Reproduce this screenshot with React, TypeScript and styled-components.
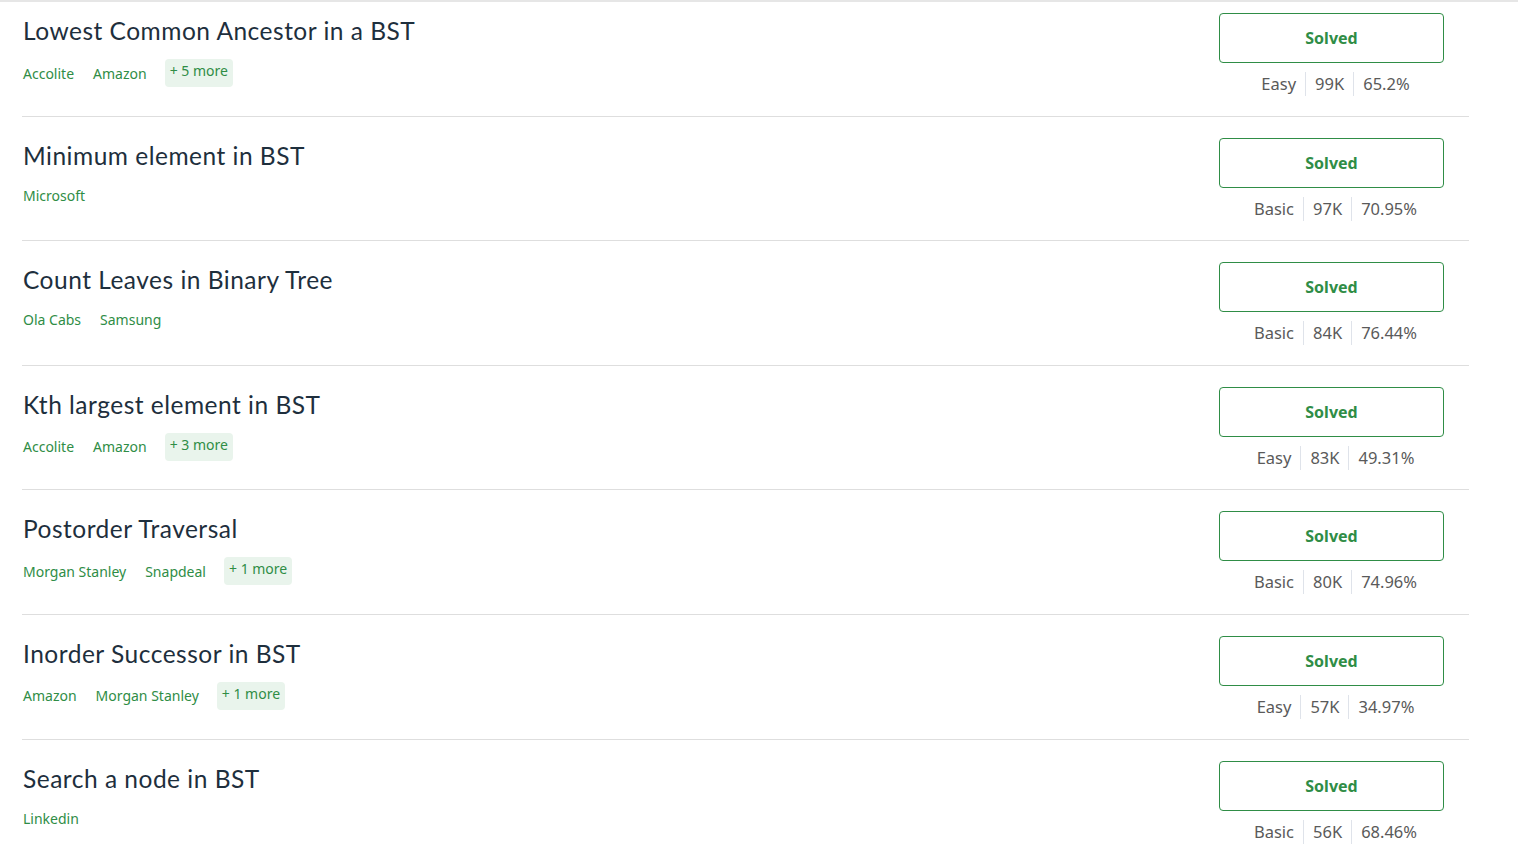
import React from "react";
import styled, { createGlobalStyle } from "styled-components";

const Global = createGlobalStyle`
  html, body { margin: 0; padding: 0; background: #fff; }
  body { overflow: hidden; }
`;

type Problem = {
  title: string;
  tags: string[];
  more?: number;
  level: string;
  subs: string;
  acc: string;
};

const problems: Problem[] = [
  { title: "Lowest Common Ancestor in a BST", tags: ["Accolite", "Amazon"], more: 5, level: "Easy", subs: "99K", acc: "65.2%" },
  { title: "Minimum element in BST", tags: ["Microsoft"], level: "Basic", subs: "97K", acc: "70.95%" },
  { title: "Count Leaves in Binary Tree", tags: ["Ola Cabs", "Samsung"], level: "Basic", subs: "84K", acc: "76.44%" },
  { title: "Kth largest element in BST", tags: ["Accolite", "Amazon"], more: 3, level: "Easy", subs: "83K", acc: "49.31%" },
  { title: "Postorder Traversal", tags: ["Morgan Stanley", "Snapdeal"], more: 1, level: "Basic", subs: "80K", acc: "74.96%" },
  { title: "Inorder Successor in BST", tags: ["Amazon", "Morgan Stanley"], more: 1, level: "Easy", subs: "57K", acc: "34.97%" },
  { title: "Search a node in BST", tags: ["Linkedin"], level: "Basic", subs: "56K", acc: "68.46%" },
];

const Viewport = styled.div`
  position: relative;
  height: 848px;
  overflow: hidden;
  border-top: 2px solid #e6e6e6;
  box-sizing: border-box;
`;

const List = styled.div`
  margin: -10px 0 0 22px;
  width: 1447px;
`;

const Row = styled.div`
  display: flex;
  justify-content: space-between;
  box-sizing: border-box;
  height: 124.6px;
  border-bottom: 1px solid #dedede;
`;

const Left = styled.div`
  display: flex;
  flex-direction: column;
  padding-top: 25px;
`;

const Title = styled.div`
  font-family: Lato, "Noto Sans", sans-serif;
  font-size: 24.5px;
  letter-spacing: 0.5px;
  line-height: 28px;
  color: #1e2f3d;
  padding-left: 1px;
`;

const Tags = styled.div<{ $chip: boolean }>`
  display: flex;
  align-items: center;
  gap: 18px;
  margin-top: ${(p) => (p.$chip ? "14px" : "16px")};
`;

const Tag = styled.span`
  font-family: "Noto Sans", sans-serif;
  font-size: 14px;
  color: #2f8d46;
  padding-left: 1px;
`;

const More = styled.span`
  font-family: "Noto Sans", sans-serif;
  font-size: 14px;
  color: #2f8d46;
  background: #e9f4ec;
  border-radius: 4px;
  padding: 3px 5px 7px;
  line-height: 18px;
`;

const Right = styled.div`
  display: flex;
  flex-direction: column;
  align-items: center;
  padding-top: 21px;
  margin-right: 25px;
  width: 225px;
`;

const SolvedButton = styled.button`
  box-sizing: border-box;
  width: 225px;
  height: 50px;
  background: #fff;
  border: 1px solid #2f8d46;
  border-radius: 4px;
  color: #2f8d46;
  font-family: "Noto Sans", sans-serif;
  font-weight: 700;
  font-size: 16px;
  cursor: pointer;
`;

const Stats = styled.div`
  display: flex;
  margin-top: 9px;
  padding-left: 8px;
`;

const Stat = styled.span`
  font-family: "Noto Sans", sans-serif;
  font-size: 16.5px;
  line-height: 24px;
  color: #5a5a5a;
  padding: 0 9px;
  & + & {
    border-left: 1px solid #dfe3ea;
  }
`;

export default function App() {
  return (
    <>
      <Global />
      <Viewport>
        <List>
          {problems.map((p) => (
            <Row key={p.title}>
              <Left>
                <Title>{p.title}</Title>
                <Tags $chip={!!p.more}>
                  {p.tags.map((t) => (
                    <Tag key={t}>{t}</Tag>
                  ))}
                  {p.more ? <More>+ {p.more} more</More> : null}
                </Tags>
              </Left>
              <Right>
                <SolvedButton>Solved</SolvedButton>
                <Stats>
                  <Stat>{p.level}</Stat>
                  <Stat>{p.subs}</Stat>
                  <Stat>{p.acc}</Stat>
                </Stats>
              </Right>
            </Row>
          ))}
        </List>
      </Viewport>
    </>
  );
}
